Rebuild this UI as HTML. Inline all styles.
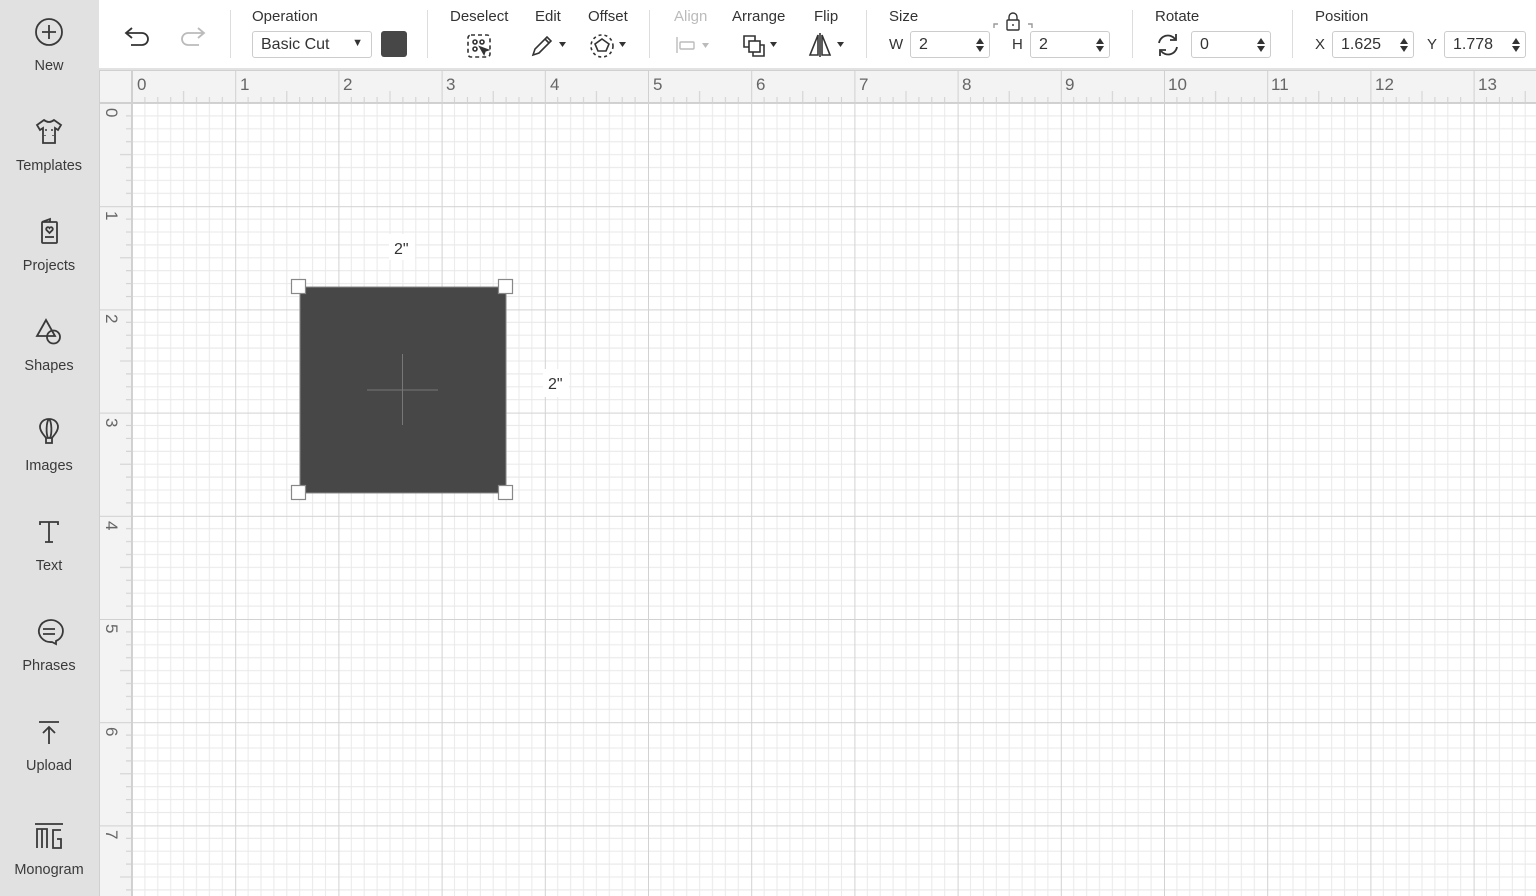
<!DOCTYPE html>
<html><head><meta charset="utf-8"><style>
*{margin:0;padding:0;box-sizing:border-box}
body{width:1536px;height:896px;overflow:hidden;font-family:"Liberation Sans",sans-serif;background:#fff;position:relative;color:#333}
#side{position:absolute;left:0;top:0;width:99px;height:896px;background:#e1e1e1}
.si{position:absolute;left:0;width:98px;text-align:center;font-size:14.5px;color:#3a3a3a}
.si svg{display:block;margin:0 auto 11px}
#top{position:absolute;left:99px;top:0;width:1437px;height:70px;background:#fff;border-bottom:2px solid #e2e2e2}
.lbl{position:absolute;top:8px;font-size:15px;color:#333}
.sep{position:absolute;top:10px;width:1px;height:48px;background:#ddd}
.inp{position:absolute;top:31px;height:27px;border:1px solid #ccc;border-radius:3px;font-size:16px;padding:4px 8px;color:#333;background:#fff}
.spin{position:absolute;right:5px;top:5px;width:8px}
.t{position:absolute;font-size:15px;color:#333}
</style></head><body>
<div id="side">
 <div class="si" style="top:17px"><svg width="30" height="30" viewBox="0 0 30 30" fill="none" stroke="#3a3a3a" stroke-width="1.8"><circle cx="15" cy="15" r="13"/><path d="M15 8v14M8 15h14"/></svg>New</div>
 <div class="si" style="top:117px"><svg width="30" height="30" viewBox="0 0 30 30" fill="none" stroke="#3a3a3a" stroke-width="1.8"><path d="M10 3l-7 5 3 5 3-2v15h12V11l3 2 3-5-7-5q-5 4-10 0z"/><path d="M11 13h2M17 13h2M11 18v1M19 18v1" stroke-width="1.4"/></svg>Templates</div>
 <div class="si" style="top:217px"><svg width="30" height="30" viewBox="0 0 30 30" fill="none" stroke="#3a3a3a" stroke-width="1.8"><rect x="8" y="5" width="15" height="21" rx="1"/><path d="M8 5l8-3v3"/><path d="M15.5 16l-3-3a1.8 1.8 0 013-2 1.8 1.8 0 013 2z"/><path d="M11 20h9"/></svg>Projects</div>
 <div class="si" style="top:317px"><svg width="30" height="30" viewBox="0 0 30 30" fill="none" stroke="#3a3a3a" stroke-width="1.8"><path d="M12 3L3 19h18z"/><circle cx="19.5" cy="20" r="6.5"/></svg>Shapes</div>
 <div class="si" style="top:417px"><svg width="30" height="30" viewBox="0 0 30 30" fill="none" stroke="#3a3a3a" stroke-width="1.8"><path d="M15 2c-6 0-9 4-9 8 0 5 5 9 6 11h6c1-2 6-6 6-11 0-4-3-8-9-8z"/><path d="M15 2c-3 3-3 15-1 19M15 2c3 3 3 15 1 19M12 21v5h6v-5"/></svg>Images</div>
 <div class="si" style="top:517px"><svg width="30" height="30" viewBox="0 0 30 30" fill="none" stroke="#3a3a3a" stroke-width="1.8"><path d="M6 8V5h18v3M15 5v20M11 25h8"/></svg>Text</div>
 <div class="si" style="top:617px"><svg width="30" height="30" viewBox="0 0 30 30" fill="none" stroke="#3a3a3a" stroke-width="1.8"><path d="M22 24a12 11 0 10-4 1l4 2z"/><path d="M9 12h12M9 17h12"/></svg>Phrases</div>
 <div class="si" style="top:717px"><svg width="30" height="30" viewBox="0 0 30 30" fill="none" stroke="#3a3a3a" stroke-width="1.8"><path d="M5 5h20M15 27V10M9 16l6-6 6 6"/></svg>Upload</div>
 <div class="si" style="top:821px"><svg width="32" height="30" viewBox="0 0 32 30" fill="none" stroke="#3a3a3a" stroke-width="1.8"><path d="M2 3h28M4 27V8h5v19M9 8h5v19M14 27V8M28 9h-8v18h8v-9h-4"/></svg>Monogram</div>
</div>

<div id="top">
 <svg style="position:absolute;left:24px;top:24px" width="30" height="26" viewBox="0 0 30 26" fill="none" stroke="#333" stroke-width="1.8"><path d="M9 4L3 9l6 5M3 9h16a6 6 0 010 12H8"/></svg>
 <svg style="position:absolute;left:78px;top:24px" width="30" height="26" viewBox="0 0 30 26" fill="none" stroke="#bbb" stroke-width="1.8"><path d="M21 4l6 5-6 5M27 9H11a6 6 0 000 12h11"/></svg>
 <div class="sep" style="left:131px"></div>
 <div class="lbl" style="left:153px">Operation</div>
 <div class="inp" style="left:153px;width:120px">Basic Cut<span style="position:absolute;right:8px;top:5px;font-size:11px">▼</span></div>
 <div style="position:absolute;left:282px;top:31px;width:26px;height:26px;background:#474747;border-radius:3px"></div>
 <div class="sep" style="left:328px"></div>
 <div class="lbl" style="left:351px">Deselect</div>
 <svg style="position:absolute;left:367px;top:33px" width="26" height="26" viewBox="0 0 26 26" fill="none" stroke="#333" stroke-width="1.6"><rect x="2" y="2" width="22" height="22" rx="3" stroke-dasharray="4 3"/><circle cx="9" cy="9" r="2"/><circle cx="16" cy="9" r="2"/><circle cx="9" cy="16" r="2"/><path d="M14 14l8 3-3 1-1 3z" fill="#333"/></svg>
 <div class="lbl" style="left:436px">Edit</div>
 <svg style="position:absolute;left:431px;top:32px" width="40" height="26" viewBox="0 0 40 26" fill="none" stroke="#333" stroke-width="1.6"><path d="M3 23l2-6L17 5l4 4L9 21z M15 7l4 4"/><path d="M29 10h7l-3.5 5z" fill="#333" stroke="none"/></svg>
 <div class="lbl" style="left:489px">Offset</div>
 <svg style="position:absolute;left:490px;top:32px" width="42" height="28" viewBox="0 0 42 28" fill="none" stroke="#333" stroke-width="1.6"><circle cx="13" cy="14" r="11" stroke-dasharray="3 3"/><path d="M13 7l7 5-3 7h-8l-3-7z"/><path d="M30 10h7l-3.5 5z" fill="#333" stroke="none"/></svg>
 <div class="sep" style="left:550px"></div>
 <div class="lbl" style="left:575px;color:#bbb">Align</div>
 <svg style="position:absolute;left:575px;top:34px" width="40" height="22" viewBox="0 0 40 22" fill="none" stroke="#bbb" stroke-width="1.4"><path d="M3 3v16"/><rect x="6" y="8" width="14" height="7" rx="1"/><path d="M28 9h7l-3.5 5z" fill="#bbb" stroke="none"/></svg>
 <div class="lbl" style="left:633px">Arrange</div>
 <svg style="position:absolute;left:641px;top:32px" width="42" height="26" viewBox="0 0 42 26" fill="none" stroke="#333" stroke-width="1.6"><path d="M9 15H4V4h11v5"/><rect x="9" y="9" width="11" height="11"/><path d="M13 20v4h11V13h-4"/><path d="M30 10h7l-3.5 5z" fill="#333" stroke="none"/></svg>
 <div class="lbl" style="left:715px">Flip</div>
 <svg style="position:absolute;left:708px;top:32px" width="42" height="26" viewBox="0 0 42 26" fill="none" stroke="#333" stroke-width="1.6"><path d="M11 3L3 23h8zM15 3l8 20h-8zM13 1v24"/><path d="M30 10h7l-3.5 5z" fill="#333" stroke="none"/></svg>
 <div class="sep" style="left:767px"></div>
 <div class="lbl" style="left:790px">Size</div>
 <div class="t" style="left:790px;top:36px">W</div>
 <div class="inp" style="left:811px;width:80px">2<svg class="spin" height="16" viewBox="0 0 8 16"><path d="M0 7l4-6 4 6zM0 9l4 6 4-6z" fill="#333"/></svg></div>
 <svg style="position:absolute;left:893px;top:12px" width="42" height="20" viewBox="0 0 42 20" fill="none" stroke="#333" stroke-width="1.4"><path d="M2 16v-4h4M40 16v-4h-4" stroke="#999"/><rect x="15" y="8" width="12" height="10" rx="1"/><path d="M17 8V5a4 4 0 018 0v3M21 12v2"/></svg>
 <div class="t" style="left:913px;top:36px">H</div>
 <div class="inp" style="left:931px;width:80px">2<svg class="spin" height="16" viewBox="0 0 8 16"><path d="M0 7l4-6 4 6zM0 9l4 6 4-6z" fill="#333"/></svg></div>
 <div class="sep" style="left:1033px"></div>
 <div class="lbl" style="left:1056px">Rotate</div>
 <svg style="position:absolute;left:1056px;top:32px" width="26" height="26" viewBox="0 0 26 26" fill="none" stroke="#333" stroke-width="1.8"><path d="M4 11a9 9 0 0116-4M22 15a9 9 0 01-16 4"/><path d="M21 2v6h-6M5 24v-6h6"/></svg>
 <div class="inp" style="left:1092px;width:80px">0<svg class="spin" height="16" viewBox="0 0 8 16"><path d="M0 7l4-6 4 6zM0 9l4 6 4-6z" fill="#333"/></svg></div>
 <div class="sep" style="left:1193px"></div>
 <div class="lbl" style="left:1216px">Position</div>
 <div class="t" style="left:1216px;top:36px">X</div>
 <div class="inp" style="left:1233px;width:82px">1.625<svg class="spin" height="16" viewBox="0 0 8 16"><path d="M0 7l4-6 4 6zM0 9l4 6 4-6z" fill="#333"/></svg></div>
 <div class="t" style="left:1328px;top:36px">Y</div>
 <div class="inp" style="left:1345px;width:82px">1.778<svg class="spin" height="16" viewBox="0 0 8 16"><path d="M0 7l4-6 4 6zM0 9l4 6 4-6z" fill="#333"/></svg></div>
</div>

<svg style="position:absolute;left:0;top:0" width="1536" height="896" viewBox="0 0 1536 896">
 <defs>
  <pattern id="g" patternUnits="userSpaceOnUse" x="132" y="103" width="103.2" height="103.2">
   <g stroke="#e9e9e9" stroke-width="1">
    <path d="M12.9 0v103.2M25.8 0v103.2M38.7 0v103.2M51.6 0v103.2M64.5 0v103.2M77.4 0v103.2M90.3 0v103.2"/>
    <path d="M0 12.9h103.2M0 25.8h103.2M0 38.7h103.2M0 51.6h103.2M0 64.5h103.2M0 77.4h103.2M0 90.3h103.2"/>
   </g>
   <path d="M0.5 0v103.2M0 0.5h103.2" stroke="#d2d2d2" stroke-width="1"/>
  </pattern>
  <pattern id="hx" patternUnits="userSpaceOnUse" x="132" y="0" width="103.2" height="896">
   <path d="M12.9 97v6M25.8 97v6M38.7 97v6M64.5 97v6M77.4 97v6M90.3 97v6M51.6 91v12" stroke="#d0d0d0" stroke-width="1"/>
   <path d="M0.5 70v33" stroke="#d0d0d0"/>
  </pattern>
  <pattern id="vy" patternUnits="userSpaceOnUse" x="0" y="103" width="1536" height="103.2">
   <path d="M126 12.9h6M126 25.8h6M126 38.7h6M126 64.5h6M126 77.4h6M126 90.3h6M120 51.6h12" stroke="#d0d0d0" stroke-width="1"/>
   <path d="M99 0.5h33" stroke="#d0d0d0"/>
  </pattern>
 </defs>
 <rect x="132" y="103" width="1404" height="793" fill="url(#g)"/>
 <rect x="99" y="70" width="1437" height="33" fill="#f3f3f3"/>
 <rect x="132" y="70" width="1404" height="33" fill="url(#hx)"/>
 <rect x="99" y="103" width="33" height="793" fill="#f3f3f3"/>
 <rect x="99" y="103" width="33" height="793" fill="url(#vy)"/>
 <path d="M99 70.5h1437M99 102.5h1437M131.5 70v826M99.5 70v826" stroke="#d0d0d0"/>
 <g font-family="Liberation Sans" font-size="17" fill="#666">
  <text x="137" y="90">0</text><text x="240" y="90">1</text><text x="343" y="90">2</text><text x="446" y="90">3</text><text x="550" y="90">4</text><text x="653" y="90">5</text><text x="756" y="90">6</text><text x="859" y="90">7</text><text x="962" y="90">8</text><text x="1065" y="90">9</text><text x="1168" y="90">10</text><text x="1271" y="90">11</text><text x="1375" y="90">12</text><text x="1478" y="90">13</text>
  <g transform="rotate(90)">
   <text x="108" y="-106">0</text><text x="211" y="-106">1</text><text x="314" y="-106">2</text><text x="418" y="-106">3</text><text x="521" y="-106">4</text><text x="624" y="-106">5</text><text x="727" y="-106">6</text><text x="830" y="-106">7</text>
  </g>
 </g>
 <rect x="300" y="287" width="206" height="206" fill="#474747" stroke="#888" stroke-width="1"/>
 <path d="M367 390h71M402.5 354v71" stroke="#777" stroke-width="1"/>
 <g fill="#fff" stroke="#888" stroke-width="1.2">
  <rect x="291.5" y="279.5" width="14" height="14"/><rect x="498.5" y="279.5" width="14" height="14"/>
  <rect x="291.5" y="485.5" width="14" height="14"/><rect x="498.5" y="485.5" width="14" height="14"/>
 </g>
 <rect x="389" y="234" width="26" height="26" fill="#fff"/>
 <rect x="543" y="369" width="26" height="28" fill="#fff"/>
 <g font-family="Liberation Sans" font-size="16" fill="#333">
  <text x="394" y="254">2"</text><text x="548" y="389">2"</text>
 </g>
</svg>
</body></html>
